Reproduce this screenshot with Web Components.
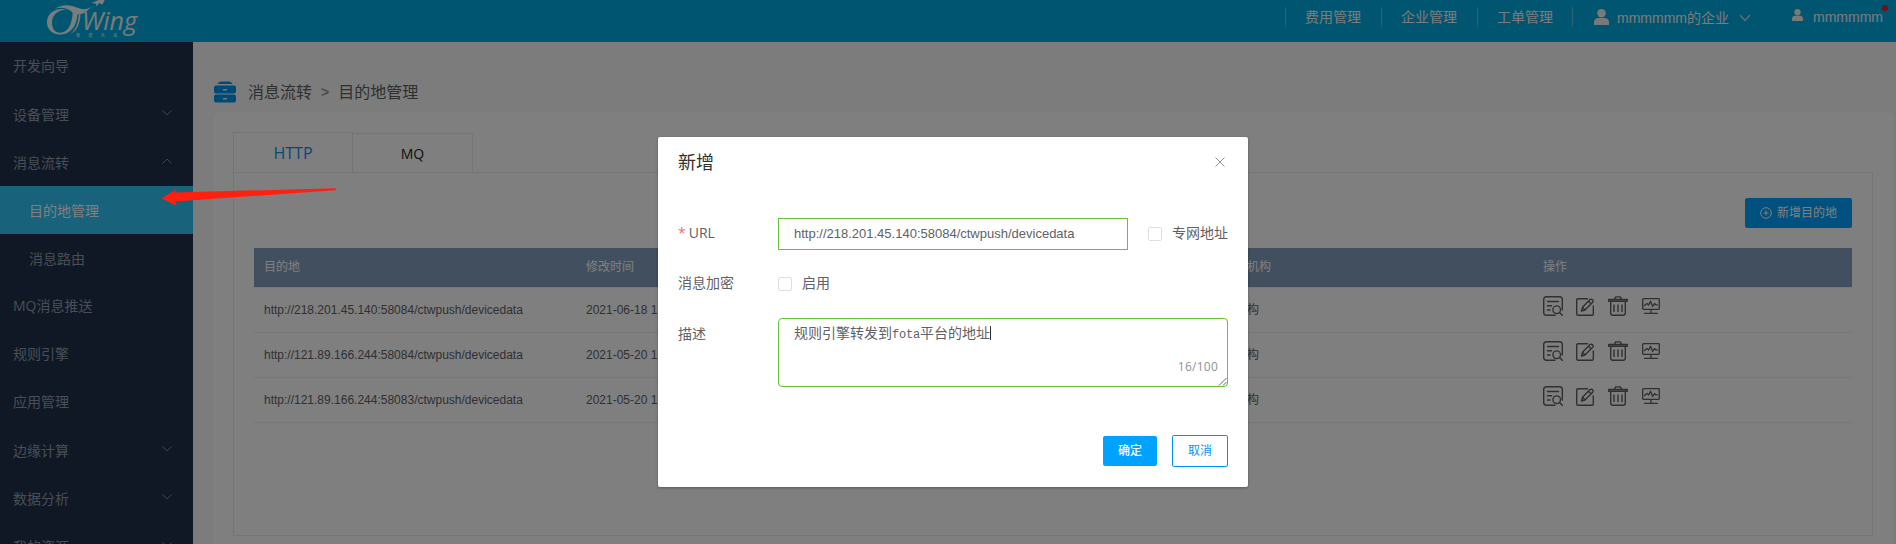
<!DOCTYPE html>
<html lang="zh-CN">
<head>
<meta charset="utf-8">
<title>CTWing</title>
<style>
body{margin:0;overflow:hidden;font-family:"Open Sans","Noto Sans CJK SC",sans-serif;font-size:14px;background:#f8f8f8}
</style>
</head>
<body>
<ctw-app></ctw-app>
<script>
const define=(name,html,init)=>{
  const t=document.createElement('template');t.innerHTML=html;
  customElements.define(name,class extends HTMLElement{
    constructor(){super();this.attachShadow({mode:'open'}).append(t.content.cloneNode(true));}
    connectedCallback(){if(init)init(this,this.shadowRoot);}
  });
};

define('ctw-logo',`<style>
:host{display:block;position:relative;width:100px;height:42px;color:#f5f5f5}
svg{position:absolute;left:0;top:0}
b{position:absolute;left:37px;top:9px;font:italic 500 25px/23px "Open Sans",sans-serif;letter-spacing:0}
small{position:absolute;left:31px;top:33px;font:4px/4px "Noto Sans CJK SC",sans-serif;letter-spacing:8.400px;white-space:nowrap}
</style>
<svg width="100" height="42" viewBox="0 0 100 42" fill="#fff" fill-opacity=".94">
<path d="M22 9.500C11 7.500 2.500 12.500 2 21.500C1.500 30.500 9.500 36 18 34.300C26.500 32.500 31.500 26 32.500 14.500C38.500 14.500 43 11 45.500 7C40 11 35 8.500 29 6.500C22 4 15 5 9.500 9C16.500 6.500 23 8 27.500 12.500V15C26.500 25 23 31.500 16 32.800C10 33.500 6.500 28 7 21.500C7.500 14.500 13.500 9.500 22 9.500Z"/>
<path d="M35.500 14.500C35 24 31.500 31.500 25.500 34C31 29.500 33.200 23 33.800 14.500Z"/>
<path d="M46.500 3L61 -3L57.500 4.500L54 3L51.500 6.500L51 3.700Z"/>
</svg><b>Wing</b><small>智能未来</small>`);

define('ctw-person',`<style>:host{display:block}svg{display:block;width:100%;height:100%}</style>
<svg viewBox="0 0 15 16" preserveAspectRatio="none" fill="#f2f2f2"><ellipse cx="7.500" cy="4.200" rx="4.300" ry="4.200"/><path d="M0 16V13.500Q0 9.500 4 9H11Q15 9.500 15 13.500V16Z"/></svg>`);

define('ctw-header',`<style>
:host{display:flex;height:42px;background:#00ace0;color:#f6f6f6;justify-content:space-between;align-items:flex-start;line-height:20px;font-family:"Liberation Sans","Noto Sans CJK SC",sans-serif}
ctw-logo{margin-left:45px}
nav{display:flex;padding-top:7px;margin-right:13px}
a{border-left:1px solid #59c6e6;height:20px;width:76px;padding-left:19px}
.org{display:flex;width:181px;padding-left:21px;border-left:1px solid #59c6e6;height:20px;box-sizing:content-box}
.org ctw-person{width:15px;height:16px;margin:2px 8px 0 0}
.org span{padding-top:1px}
.org svg{margin:7px 0 0 10px}
.me{display:flex;position:relative;width:91px;margin-left:17px}
.me ctw-person{width:11px;height:12px;margin:2px 10px 0 0}
.me i{position:absolute;right:-5px;top:-2px;width:6px;height:6px;border-radius:50%;background:#f41a20}
</style>
<ctw-logo></ctw-logo>
<nav><a>费用管理</a><a>企业管理</a><a style="width:75px">工单管理</a>
<div class="org"><ctw-person></ctw-person><span>mmmmmm的企业</span><svg width="12" height="8" fill="none" stroke="#ddd" stroke-width="1.200"><path d="M1 1L6 6.500L11 1"/></svg></div>
<div class="me"><ctw-person></ctw-person><span>mmmmmm</span><i></i></div></nav>`);

define('ctw-menu-item',`<style>
:host{display:flex;box-sizing:border-box;height:48px;padding:0 21px 0 13px;align-items:center;justify-content:space-between;color:#8f9dae;line-height:20px}
:host([sub]){padding-left:29px}
:host([group]) span,:host([sub]) span{padding-top:2px}
:host([active]){background:#30c4f6;color:#fff}
svg{display:none;margin-bottom:2px}
:host([group]) svg{display:block}
:host([group=up]) svg{transform:scaleY(-1)}
</style><span><slot></slot></span><svg width="10" height="6" fill="none" stroke="#78869a"><path d="M.5 .5L5 5L9.500 .5"/></svg>`);

define('ctw-sidebar',`<style>:host{display:block;width:193px;flex:none;background:#22304a;overflow:hidden}</style>
<ctw-menu-item>开发向导</ctw-menu-item>
<ctw-menu-item group="down">设备管理</ctw-menu-item>
<ctw-menu-item group="up">消息流转</ctw-menu-item>
<ctw-menu-item sub active>目的地管理</ctw-menu-item>
<ctw-menu-item sub>消息路由</ctw-menu-item>
<ctw-menu-item>MQ消息推送</ctw-menu-item>
<ctw-menu-item>规则引擎</ctw-menu-item>
<ctw-menu-item>应用管理</ctw-menu-item>
<ctw-menu-item group="down">边缘计算</ctw-menu-item>
<ctw-menu-item group="down">数据分析</ctw-menu-item>
<ctw-menu-item group="down">我的资源</ctw-menu-item>`);

define('ctw-breadcrumb',`<style>
:host{display:flex;height:24px;align-items:center;font-size:16px;color:#606060;line-height:24px;padding-left:1px}
svg{margin-right:12px}i{font:bold 14px/24px "Liberation Sans",sans-serif;color:#999;margin:0 9px 0 9px}
</style><svg width="22" height="22" fill="#0094ea"><path d="M3.500 3Q4.500 .5 7 .5H15Q17.500 .5 18.500 3Z"/><rect y="4.500" width="22" height="8" rx="2"/><rect y="13.500" width="22" height="8" rx="2"/><path d="M9 8h4v1.500H9zM9 17h4v1.500H9z" fill="#e8f3fa"/></svg><span>消息流转</span><i>&gt;</i><span>目的地管理</span>`);

define('ctw-tabs',`<style>
:host{display:flex;height:40px;align-items:flex-end}
div{box-sizing:border-box;width:120px;height:39px;border:1px solid #ececec;border-left:0;border-bottom:0;text-align:center;line-height:40px;color:#202124}
.on{height:40px;border-left:1px solid #ececec;color:#0094ee;font-size:16px;line-height:40px;border-color:#e8e8e8}
</style><div class="on">HTTP</div><div>MQ</div>`);

define('ctw-row-actions',`<style>:host{display:flex;height:20px;align-items:flex-end}svg{fill:none;stroke:#606060;stroke-width:1.400;stroke-linecap:round;stroke-linejoin:round}</style>
<svg width="20" height="20" style="margin-right:13px"><path d="M12 19.300H3.500Q.7 19.300 .7 16.500V3.500Q.7 .7 3.500 .7H16.500Q19.300 .7 19.300 3.500V14M4.500 5.500H15.500M4.500 9.700H8.500M4.500 14H7"/><circle cx="13.700" cy="13.700" r="3.800"/><path d="M16.500 16.500L19.300 19.300"/></svg>
<svg width="18" height="18" style="margin-right:14px"><path d="M11.500 .7H2Q.7 .7 .7 2V16Q.7 17.300 2 17.300H16Q17.300 17.300 17.300 16V8M5.500 13L6.500 9.300L14 1.500Q15.500 .7 16.700 2Q17.600 3.200 16.700 4.200L9 12Z M12.500 3.300L15 5.800M6.500 9.300L9 12"/></svg>
<svg width="20" height="20" style="margin-right:14px"><path d="M.7 3.500H19.300V5.300H.7ZM6.500 3.300L7.500 .9H12.500L13.500 3.300M2.700 5.500V17Q2.700 19.300 5 19.300H15Q17.300 19.300 17.300 17V5.500M6 9V15.500M10 9V15.500M14 9V15.500"/></svg>
<svg width="18" height="16" style="margin-bottom:2px"><path d="M1.500 .7H16.500Q17.300 .7 17.300 1.500V10.500Q17.300 11.300 16.500 11.300H1.500Q.7 11.300 .7 10.500V1.500Q.7 .7 1.500 .7M9 11.500V15M2.500 15.300H15.500M2.500 7.500L5 5.500L6.700 7L8.500 3.200L10.700 8.500L12.500 5.500L13.700 6.800H15.500" stroke-width="1.300"/></svg>`);

define('ctw-table',`<style>
:host{display:block;font:12px/20px "Liberation Sans","Noto Sans CJK SC",sans-serif;color:#606266}
.r{display:grid;grid-template-columns:322px 661px 296px 1fr;padding-left:10px;height:44px;align-items:center;border-bottom:1px solid #ebeef5}
.h{height:39px;background:#849ebe;background-clip:padding-box;color:#fff}
.h span{margin-top:-2px}
ctw-row-actions{margin:-9px 0 0 0}
</style>
<div class="r h"><span>目的地</span><span>修改时间</span><span>机构</span><span>操作</span></div>`,(el,root)=>{
 [['http://218.201.45.140:58084/ctwpush/devicedata','2021-06-18 1'],['http://121.89.166.244:58084/ctwpush/devicedata','2021-05-20 1'],['http://121.89.166.244:58083/ctwpush/devicedata','2021-05-20 1']].forEach(([u,d])=>{
  const r=document.createElement('div');r.className='r';
  r.innerHTML=`<span>${u}</span><span>${d}</span><span>构</span><ctw-row-actions></ctw-row-actions>`;root.append(r);
 });
});

define('ctw-button',`<style>
:host{display:flex;box-sizing:border-box;align-items:center;justify-content:center;height:30px;background:#00a2ff;color:#fff;border-radius:2px;font-size:12px;line-height:18px;padding-bottom:1px}
:host([plain]){height:32px;background:#fff;color:#0096f5;border:1px solid #0096f5}
</style><slot></slot>`);

define('ctw-page',`<style>
:host{display:block;flex:1;min-width:0;padding:38px 2px 0 20px}
.card{background:#fff;border-radius:6px 6px 0 0;margin-top:8px;padding:20px 21px 0 20px;height:432px;box-sizing:border-box}
.panel{box-sizing:border-box;border:1px solid #ececec;height:364px;padding:25px 20px 0}
.bar{display:flex;justify-content:flex-end;height:50px}
ctw-button{width:107px}
svg{margin-right:5px}
</style><ctw-breadcrumb></ctw-breadcrumb>
<div class="card"><ctw-tabs></ctw-tabs><div class="panel"><div class="bar"><ctw-button><svg width="12" height="12" fill="none" stroke="#fff"><circle cx="6" cy="6" r="5.300"/><path d="M6 3.500V8.500M3.500 6H8.500"/></svg>新增目的地</ctw-button></div><ctw-table></ctw-table></div></div>`);

define('ctw-checkbox',`<style>
:host{display:flex;align-items:center;line-height:20px;gap:10px}
i{box-sizing:border-box;width:14px;height:14px;border:1px solid #dcdfe6;border-radius:2px;background:#fff;margin-top:2px}
</style><i></i><span><slot></slot></span>`);

define('ctw-field',`<style>
:host{display:flex;color:#606266}
label{width:100px;line-height:20px;flex:none}
:host([top]) label{padding-top:6px}
:host([required]) label{padding-bottom:2px}
:host([required]) label::before{content:"*";color:#f56c6c;margin-right:3px}
</style><label></label><slot></slot>`,(el,root)=>{root.querySelector('label').textContent=el.getAttribute('label');});

define('ctw-dialog',`<style>
:host{display:flex;flex-direction:column;box-sizing:border-box;width:590px;height:350px;background:#fff;border-radius:2px;box-shadow:0 1px 3px rgba(0,0,0,.3);padding:13px 20px 20px}
.head{display:flex;justify-content:space-between;align-items:center;height:24px;font-size:18px;line-height:24px;color:#303133}
.head svg{margin-right:3px}
.url{margin-top:44px;height:32px;align-items:center}
.url>div{box-sizing:border-box;width:350px;height:32px;border:1px solid #67c23a;padding:0 15px;font:13px/29px "Liberation Sans",sans-serif;margin-right:20px}
.url ctw-checkbox{margin-top:-2px}
.enc{margin-top:23px;height:20px;align-items:center}
.desc{margin-top:25px}
.area{position:relative;box-sizing:border-box;width:450px;height:69px;border:1px solid #67c23a;border-radius:4px;padding:4px 15px;line-height:20px}
.area span{font:12px "Liberation Mono",monospace;letter-spacing:-.2px}
.area i{display:inline-block;width:1px;height:14px;background:#333;vertical-align:-2px}
.area em{position:absolute;right:9px;bottom:10px;font-style:normal;font-size:12px;line-height:18px;letter-spacing:.25px;color:#909399}
.area svg{position:absolute;right:0;bottom:0}
.foot{display:flex;justify-content:flex-end;align-items:center;gap:15px;margin-top:auto}
</style>
<div class="head"><span>新增</span><svg width="10" height="10" stroke="#909399"><path d="M.5 .5L9.500 9.500M9.500 .5L.5 9.500"/></svg></div>
<ctw-field class="url" label="URL" required><div>http://218.201.45.140:58084/ctwpush/devicedata</div><ctw-checkbox>专网地址</ctw-checkbox></ctw-field>
<ctw-field class="enc" label="消息加密"><ctw-checkbox>启用</ctw-checkbox></ctw-field>
<ctw-field class="desc" label="描述" top><div class="area">规则引擎转发到<span>fota</span>平台的地址<i></i><em>16/100</em><svg width="9" height="9" stroke="#666"><path d="M1 8.500L8.500 1M5 8.500L8.500 5"/></svg></div></ctw-field>
<div class="foot"><ctw-button style="width:54px;font-weight:500">确定</ctw-button><ctw-button plain style="width:56px">取消</ctw-button></div>`);

define('ctw-app',`<style>
:host{display:block;position:relative;width:1896px;height:544px;overflow:hidden}
.main{display:flex;height:502px}
.mask{position:absolute;inset:0;background:rgba(0,0,0,.5)}
ctw-dialog{position:absolute;left:658px;top:137px}
.arrow{position:absolute;left:161px;top:186px}
</style>
<ctw-header></ctw-header><div class="main"><ctw-sidebar></ctw-sidebar><ctw-page></ctw-page></div>
<div class="mask"></div><ctw-dialog></ctw-dialog>
<svg class="arrow" width="176" height="22" fill="#ff2010"><path d="M.5 12.500L15 3.200L14 6.500L174 2.200Q176 3.500 174 4.200L14 15.500L16 20Z"/></svg>`);
</script>
</body>
</html>
